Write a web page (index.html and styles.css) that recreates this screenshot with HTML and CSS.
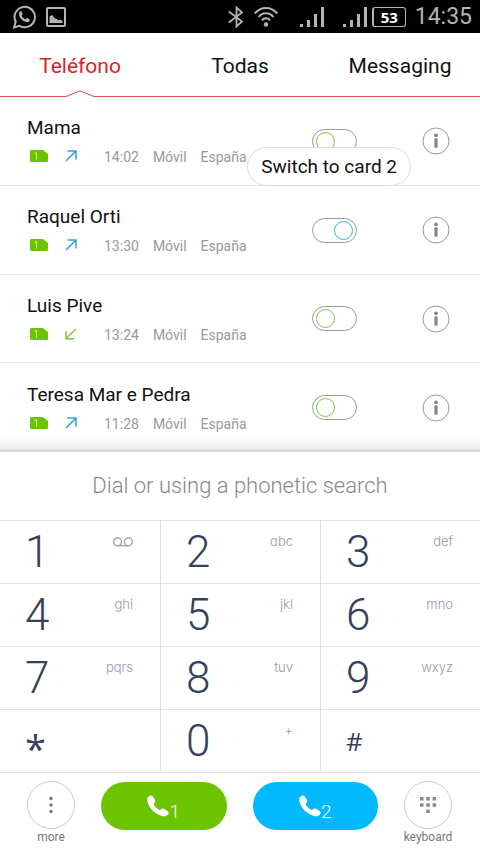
FILE: index.html
```html
<!DOCTYPE html>
<html lang="es">
<head>
<meta charset="utf-8">
<meta name="viewport" content="width=device-width, initial-scale=1">
<title>Teléfono</title>
<link rel="stylesheet" href="styles.css">
</head>
<body>
<svg class="defs" aria-hidden="true">
  <symbol id="signal" viewBox="0 0 24 22">
    <path fill="currentColor" d="M0 18h3v3H0zM7 14h3v7H7zM14 8h3v13h-3zM21 1h3v20h-3z"/>
  </symbol>
  <symbol id="sim" viewBox="0 0 18 12">
    <path fill="#6cc400" d="M1 0h12l5 4v7l-1 1H1l-1-1V1z"/>
    <path fill="none" stroke="#d8f5b0" d="M4.500 3.500l2-1V9.500"/>
  </symbol>
  <symbol id="out" viewBox="0 0 12 12">
    <path fill="none" stroke="#2aa5cf" stroke-width="1.500" d="M1 11L11 1M2.500 1H11v8.500"/>
  </symbol>
  <symbol id="in" viewBox="0 0 12 12">
    <path fill="none" stroke="#84c341" stroke-width="1.500" d="M11 1L1 10.500M1 3v7.700h8"/>
  </symbol>
  <symbol id="info" viewBox="0 0 28 28">
    <circle cx="14" cy="14" r="13" fill="none" stroke="#999"/>
    <circle cx="14" cy="8.300" r="1.900" fill="#858585"/>
    <rect x="12.400" y="11.300" width="3.200" height="9.400" rx="1" fill="#858585"/>
  </symbol>
  <symbol id="handset" viewBox="0 0 22 22">
    <path fill="#fff" d="M1.800 1.300C3 .2 4.900 0 5.800 1.400l2 3.300c.8 1.300.4 2.500-.6 3.500-.6.600-.6 1.100-.1 1.900 1.200 1.900 2.600 3.300 4.600 4.500.8.500 1.400.4 2-.200.9-.9 2.100-1.200 3.400-.500l3.500 2.100c1.300.8 1.400 2.300.4 3.500-1.200 1.500-2.800 2-4.700 1.700C8.600 19.900 1.900 13.400.4 6.200 0 4.300.4 2.600 1.800 1.300z"/>
  </symbol>
</svg>

<header class="status">
  <svg class="whatsapp" viewBox="0 0 24 24" role="img" aria-label="WhatsApp">
    <path fill="none" stroke="currentColor" stroke-width="2" d="M2 22.500l1.700-5.800A10.200 10.200 0 1 1 7.600 20.800z"/>
    <path fill="currentColor" d="M8 6.500c.8-.7 1.500-.4 1.800.4l.8 1.800c.2.700-.8 1.300-1 1.900.8 1.700 2 2.900 3.900 3.700.7-.2 1.100-1.400 1.800-1.200l2.100 1.100c.8.500.1 1.900-.6 2.500-2.700 1.900-9.700-2.600-9.800-7.400 0-1.100.3-2.100 1-2.800z"/>
  </svg>
  <svg class="picture" viewBox="0 0 20 20" role="img" aria-label="Screenshot">
    <rect x="1" y="1" width="18" height="18" rx="1" fill="none" stroke="currentColor" stroke-width="2"/>
    <path fill="currentColor" d="M3.500 16V9.500L6 8l3 3.500 2 .500 1.500 1.500 1.500-1 2.500 1.500v2z"/>
  </svg>
  <svg class="bluetooth" viewBox="0 0 16 22" role="img" aria-label="Bluetooth">
    <path fill="none" stroke="currentColor" stroke-width="1.800" d="M.8 5.500L14 15.500l-5.500 5V1.500L14 6.500.8 16.500"/>
  </svg>
  <svg class="wifi" viewBox="0 0 24 22" role="img" aria-label="Wi-Fi">
    <path fill="none" stroke="currentColor" stroke-width="2" d="M.8 7.500C7 0 17 0 23.200 7.500M4.500 11c4-5 11-5 15 0M8 14.300c2-2.700 6-2.700 8 0"/>
    <circle cx="12" cy="18.500" r="2.200" fill="currentColor"/>
  </svg>
  <svg class="signal" role="img" aria-label="SIM 1"><use href="#signal"/></svg>
  <svg class="signal" role="img" aria-label="SIM 2"><use href="#signal"/></svg>
  <span class="battery">53</span>
  <time class="clock">14:35</time>
</header>

<nav class="tabs">
  <a class="tab active" href="#telefono">Teléfono
    <svg class="notch" viewBox="0 0 30 8" aria-hidden="true"><path fill="#fff" d="M1 8L1 6.500 15 .8l14 5.700V8z"/><path fill="none" stroke="#dc5b58" stroke-width="1.200" d="M0 6.500h1L15 .800l14 5.700h1"/></svg>
  </a>
  <a class="tab" href="#todas">Todas</a>
  <a class="tab" href="#messaging">Messaging</a>
</nav>

<main>
  <ul class="calls">
    <li class="call">
      <div class="who">
        <h2>Mama</h2>
        <p class="meta"><svg class="sim"><use href="#sim"/></svg><svg class="dir"><use href="#out"/></svg><time>14:02</time><span>Móvil</span><span>España</span></p>
      </div>
      <input class="switch" type="checkbox" aria-label="Card for Mama">
      <button class="info" aria-label="Mama details"><svg><use href="#info"/></svg></button>
      <div class="tip" role="tooltip">Switch to card 2</div>
    </li>
    <li class="call">
      <div class="who">
        <h2>Raquel Orti</h2>
        <p class="meta"><svg class="sim"><use href="#sim"/></svg><svg class="dir"><use href="#out"/></svg><time>13:30</time><span>Móvil</span><span>España</span></p>
      </div>
      <input class="switch" type="checkbox" checked aria-label="Card for Raquel Orti">
      <button class="info" aria-label="Raquel Orti details"><svg><use href="#info"/></svg></button>
    </li>
    <li class="call">
      <div class="who">
        <h2>Luis Pive</h2>
        <p class="meta"><svg class="sim"><use href="#sim"/></svg><svg class="dir"><use href="#in"/></svg><time>13:24</time><span>Móvil</span><span>España</span></p>
      </div>
      <input class="switch" type="checkbox" aria-label="Card for Luis Pive">
      <button class="info" aria-label="Luis Pive details"><svg><use href="#info"/></svg></button>
    </li>
    <li class="call">
      <div class="who">
        <h2>Teresa Mar e Pedra</h2>
        <p class="meta"><svg class="sim"><use href="#sim"/></svg><svg class="dir"><use href="#out"/></svg><time>11:28</time><span>Móvil</span><span>España</span></p>
      </div>
      <input class="switch" type="checkbox" aria-label="Card for Teresa Mar e Pedra">
      <button class="info" aria-label="Teresa Mar e Pedra details"><svg><use href="#info"/></svg></button>
    </li>
  </ul>

  <section class="dialer">
    <input class="search" type="text" aria-label="Number or name" placeholder="Dial or using a phonetic search">
    <div class="keys">
      <button class="key"><span class="digit">1</span><svg class="voicemail" viewBox="0 0 20 10" role="img" aria-label="Voicemail"><path fill="none" stroke="#8f9bb0" stroke-width="1.200" d="M5 8.800h10"/><circle cx="4.600" cy="4.800" r="4" fill="none" stroke="#8f9bb0" stroke-width="1.200"/><circle cx="15.400" cy="4.800" r="4" fill="none" stroke="#8f9bb0" stroke-width="1.200"/></svg></button>
      <button class="key"><span class="digit">2</span><span class="letters">abc</span></button>
      <button class="key"><span class="digit">3</span><span class="letters">def</span></button>
      <button class="key"><span class="digit">4</span><span class="letters">ghi</span></button>
      <button class="key"><span class="digit">5</span><span class="letters">jkl</span></button>
      <button class="key"><span class="digit">6</span><span class="letters">mno</span></button>
      <button class="key"><span class="digit">7</span><span class="letters">pqrs</span></button>
      <button class="key"><span class="digit">8</span><span class="letters">tuv</span></button>
      <button class="key"><span class="digit">9</span><span class="letters">wxyz</span></button>
      <button class="key"><span class="digit star">*</span></button>
      <button class="key"><span class="digit">0</span><span class="letters">+</span></button>
      <button class="key"><span class="digit hash">#</span></button>
    </div>
    <div class="actions">
      <button class="tool">
        <span class="ring"><svg viewBox="0 0 20 20" fill="#777"><circle cx="10" cy="3.500" r="1.700"/><circle cx="10" cy="10" r="1.700"/><circle cx="10" cy="16.500" r="1.700"/></svg></span>
        <span>more</span>
      </button>
      <button class="dial first" aria-label="Call with card 1"><svg><use href="#handset"/></svg><span>1</span></button>
      <button class="dial second" aria-label="Call with card 2"><svg><use href="#handset"/></svg><span>2</span></button>
      <button class="tool">
        <span class="ring"><svg viewBox="0 0 20 20" fill="#888"><path d="M2 2h3.500v3.500H2zM8.300 2h3.500v3.500H8.300zM14.600 2h3.500v3.500h-3.500zM2 8.300h3.500v3.500H2zM8.300 8.300h3.500v3.500H8.300zM14.600 8.300h3.500v3.500h-3.500zM8.300 14.600h3.500v3.500H8.300z"/></svg></span>
        <span>keyboard</span>
      </button>
    </div>
  </section>
</main>
</body>
</html>
```

FILE: styles.css
```css
* {
  box-sizing: border-box;
}

body {
  margin: 0;
  background: #fff;
  color: #111;
  font-family: Roboto, "Noto Sans", sans-serif;
}

button {
  padding: 0;
  border: 0;
  background: none;
  color: inherit;
  font: inherit;
}

svg {
  display: block;
  flex: none;
}

.defs {
  display: none;
}

/* Status bar */
.status {
  display: flex;
  align-items: center;
  height: 33px;
  padding: 0 8px 0 12px;
  background: #000;
  color: #b4b4b4;
}

.whatsapp {
  width: 24px;
  height: 24px;
}

.picture {
  width: 20px;
  height: 20px;
  margin-left: 10px;
}

.bluetooth {
  width: 16px;
  height: 22px;
  margin-left: auto;
}

.wifi {
  width: 24px;
  height: 22px;
  margin: 0 22px 0 10px;
}

.signal {
  width: 24px;
  height: 22px;
}

.signal + .signal {
  margin: 0 5px 0 19px;
}

.battery {
  width: 34px;
  height: 20px;
  border: 1px solid #b4b4b4;
  border-left-width: 2px;
  border-radius: 3px;
  color: #fff;
  font: bold 15px/18px "Noto Sans", sans-serif;
  text-align: center;
}

.clock {
  margin-left: 9px;
  font-size: 23px;
  line-height: 33px;
}

/* Tabs */
.tabs {
  display: grid;
  grid-template-columns: repeat(3, 1fr);
  height: 64px;
  border-bottom: 1px solid #dc5b58;
}

.tab {
  position: relative;
  height: 64px;
  color: #111;
  font-size: 21px;
  line-height: 66px;
  text-align: center;
  text-decoration: none;
}

.tab.active {
  color: #d9231f;
}

.notch {
  position: absolute;
  bottom: -1px;
  left: calc(50% - 15px);
  width: 30px;
  height: 8px;
}

/* Call log */
.calls {
  margin: 0;
  padding: 0;
  list-style: none;
}

.call {
  position: relative;
  display: flex;
  align-items: center;
  height: 89px;
  padding: 0 30px 0 27px;
  border-bottom: 1px solid #e6e6e6;
}

.call:nth-child(3) {
  height: 88px;
}

.call:last-child {
  border-bottom: 0;
}

.who {
  flex: 1;
}

h2 {
  margin: 0;
  font-size: 19px;
  font-weight: 400;
  line-height: 26px;
}

.meta {
  display: flex;
  align-items: center;
  margin: 4px 0 0;
  padding-left: 3px;
  color: #999;
  font-size: 14px;
  line-height: 20px;
}

.meta time,
.meta span {
  padding-top: 2px;
}

.sim {
  width: 18px;
  height: 12px;
}

.dir {
  width: 12px;
  height: 12px;
  margin: 0 27px 0 17px;
}

.meta span {
  margin-left: 14px;
}

.switch {
  display: flex;
  align-items: center;
  width: 45px;
  height: 25px;
  margin: 0 65px 0 0;
  padding: 0 3px;
  border: 1px solid #999;
  border-radius: 13px;
  background: #fff;
  appearance: none;
}

.switch::before {
  width: 17px;
  height: 17px;
  border: 1px solid #84c341;
  border-radius: 50%;
  content: "";
}

.switch:checked {
  justify-content: flex-end;
}

.switch:checked::before {
  border-color: #2fb4e4;
}

.info svg {
  width: 28px;
  height: 28px;
}

.tip {
  position: absolute;
  right: 69px;
  bottom: -1px;
  padding: 0 13px;
  border: 1px solid #ddd;
  border-radius: 20px;
  background: #fff;
  font-size: 19px;
  line-height: 37px;
  white-space: nowrap;
}

/* Dialer */
.dialer {
  position: relative;
}

.dialer::before {
  position: absolute;
  bottom: 100%;
  width: 100%;
  height: 12px;
  border-bottom: 3px solid #ddd;
  background: linear-gradient(#fff, #ececec);
  content: "";
}

.search {
  display: block;
  width: 100%;
  height: 68px;
  padding: 0;
  border: 0;
  color: #333;
  font: 300 22px/68px Roboto, sans-serif;
  text-align: center;
}

.search::placeholder {
  color: #888;
  opacity: 1;
}

.keys {
  display: grid;
  grid-template-columns: repeat(3, 1fr);
  border-bottom: 1px solid #e2e2e2;
}

.key {
  display: flex;
  align-items: flex-start;
  justify-content: space-between;
  height: 63px;
  padding: 0 27px 0 25px;
  border-top: 1px solid #e2e2e2;
  border-left: 1px solid #e2e2e2;
}

.key:nth-child(3n+1) {
  border-left: 0;
}

.digit {
  color: #34425a;
  font-size: 44px;
  font-weight: 300;
  line-height: 62px;
}

.star,
.hash {
  font-family: "Open Sans", sans-serif;
  font-weight: 400;
}

.star {
  font-size: 38px;
  line-height: 76px;
}

.hash {
  font-size: 26px;
}

.letters {
  color: #8f9bb0;
  font-family: Inter, sans-serif;
  font-size: 13px;
  font-weight: 300;
  font-feature-settings: "cv11";
  line-height: 40px;
}

.voicemail {
  width: 20px;
  height: 10px;
  margin-top: 16px;
}

.actions {
  display: flex;
  align-items: flex-start;
  gap: 26px;
  padding: 8px 28px 0 27px;
}

.tool {
  display: flex;
  flex-direction: column;
  align-items: center;
  width: 48px;
  color: #777;
  font-size: 12px;
  line-height: 16px;
  white-space: nowrap;
}

.ring {
  display: flex;
  align-items: center;
  justify-content: center;
  width: 48px;
  height: 48px;
  border: 1px solid #ccc;
  border-radius: 50%;
}

.ring svg {
  width: 20px;
  height: 20px;
}

.dial {
  display: flex;
  flex: 1;
  align-items: center;
  justify-content: center;
  height: 48px;
  margin-top: 1px;
  border-radius: 24px;
  color: #fff;
  font-size: 19px;
  font-weight: 300;
}

.dial svg {
  width: 22px;
  height: 22px;
}

.dial span {
  padding-top: 10px;
}

.first {
  background: #6cc400;
}

.second {
  background: #00b9ff;
}
```
